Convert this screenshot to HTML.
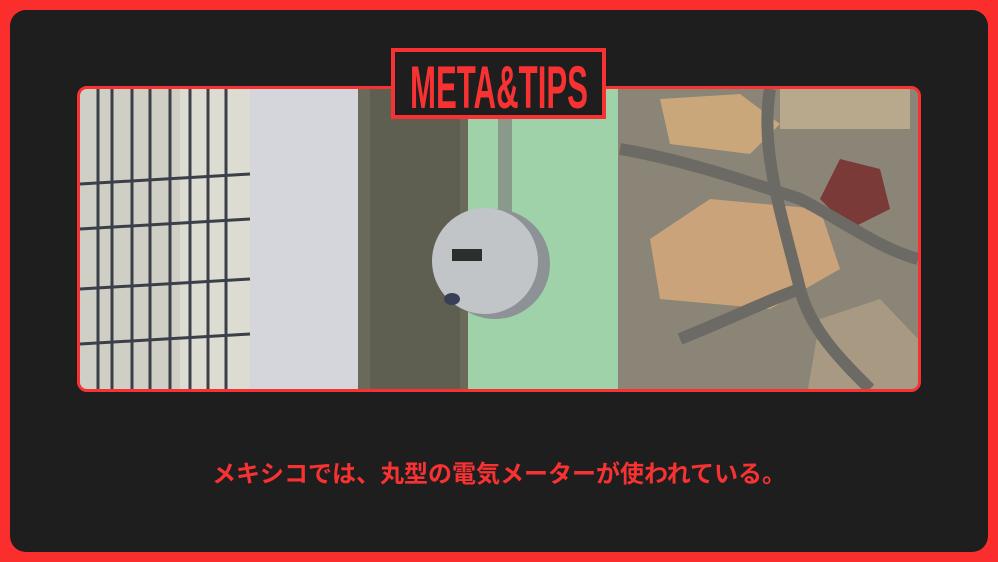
<!DOCTYPE html>
<html><head><meta charset="utf-8"><style>
html,body{margin:0;padding:0;}
body{width:998px;height:562px;background:#fb2e2e;position:relative;overflow:hidden;}
.inner{position:absolute;left:10px;top:10px;width:978px;height:542px;background:#1e1e1e;border-radius:16px;}
.img{position:absolute;left:77px;top:86px;width:838px;height:300px;border:3px solid #f83232;border-radius:10px;overflow:hidden;background:#888;}
.badge{position:absolute;left:391px;top:48px;width:207px;height:63px;border:4px solid #f83232;background:#1e1e1e;}
.cap{position:absolute;left:0;width:998px;top:459px;text-align:center;color:#f83232;font-family:"Liberation Sans","Noto Sans CJK JP",sans-serif;font-weight:bold;font-size:24px;line-height:32px;}
</style></head><body>
<div class="inner"></div>
<div class="img">
<svg width="838" height="300" viewBox="0 0 838 300">
<rect x="0" y="0" width="170" height="300" fill="#cfcfc6"/>
<rect x="100" y="0" width="70" height="300" fill="#dcdcd2"/>
<rect x="170" y="0" width="108" height="300" fill="#d4d6dc"/>
<rect x="278" y="0" width="112" height="300" fill="#6a6a5a"/>
<rect x="290" y="0" width="90" height="300" fill="#5e5f50"/>
<rect x="388" y="0" width="150" height="300" fill="#9fd2a8"/>
<rect x="538" y="0" width="300" height="300" fill="#8a8577"/>
<g stroke="#3a3f48" stroke-width="3" fill="none">
<path d="M18 0V300M32 0V300M52 0V300M70 0V300M90 0V300M110 0V300M128 0V300M146 0V300"/>
<path d="M0 95L170 85M0 140L170 130M0 200L170 190M0 255L170 245"/>
</g>
<path d="M580 10l80 -5 40 30 -30 30 -80 -10z" fill="#c9a77a"/>
<path d="M570 150l60 -40 110 10 20 60 -70 40 -110 -10z" fill="#caa37a"/>
<path d="M700 0h130v40h-130z" fill="#b8a98c"/>
<path d="M760 70l40 10 10 40 -40 20 -30 -30z" fill="#7a3a38"/>
<path d="M740 230l60 -20 38 40v50h-110z" fill="#a89a82"/>
<g stroke="#6c6a64" stroke-width="12" fill="none">
<path d="M540 60 C600 70 660 90 720 110 C760 130 800 160 838 170"/>
<path d="M690 0 C680 60 700 120 720 200 C730 240 760 270 790 300"/>
<path d="M600 250 C650 230 690 210 720 200"/>
</g>
<rect x="418" y="0" width="14" height="130" fill="#8a9a8a"/>
<circle cx="415" cy="175" r="55" fill="#8c9296"/>
<circle cx="405" cy="172" r="53" fill="#c2c5c8"/>
<rect x="372" y="160" width="30" height="12" fill="#2a302c"/>
<ellipse cx="372" cy="210" rx="8" ry="6" fill="#3a3f58"/>
</svg>
</div>
<div class="badge"><svg width="207" height="63" viewBox="0 0 207 63"><text x="15" y="56" textLength="178" lengthAdjust="spacingAndGlyphs" font-family="Liberation Sans, sans-serif" font-weight="bold" font-size="60" fill="#f83232">META&amp;TIPS</text></svg></div>
<div class="cap">メキシコでは、丸型の電気メーターが使われている。</div>
</body></html>
